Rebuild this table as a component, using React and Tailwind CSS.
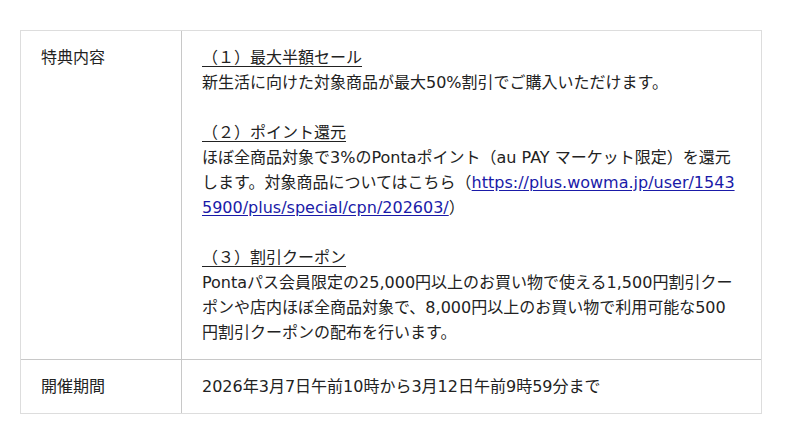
export default function App() {
  const font = { fontFamily: '"DejaVu Sans", "Noto Sans CJK JP", sans-serif' };
  return (
    <div className="min-h-[444px] w-[800px] bg-white pl-[20px] pt-[30px] text-[16px] leading-[25px] text-[#222]" style={font}>
      <div className="grid w-[742px] grid-cols-[161px_1fr] border border-[#dddddd]">
        <div className="border-b border-r border-[#c8c8c8] px-[20px] py-[14px]">特典内容</div>
        <div className="border-b border-[#c8c8c8] px-[20px] py-[14px]">
          <div><span className="underline underline-offset-[3px]">（１）最大半額セール</span></div>
          <div>新生活に向けた対象商品が最大50%割引でご購入いただけます。</div>
          <div>&nbsp;</div>
          <div><span className="underline underline-offset-[3px]">（２）ポイント還元</span></div>
          <div>
            ほぼ全商品対象で3%のPontaポイント（au PAY マーケット限定）を還元します。対象商品についてはこちら（
            <a href="#" className="break-all text-[#1a1aa8] underline underline-offset-[2px]">https://plus.wowma.jp/user/15435900/plus/special/cpn/202603/</a>）
          </div>
          <div>&nbsp;</div>
          <div><span className="underline underline-offset-[3px]">（３）割引クーポン</span></div>
          <div>Pontaパス会員限定の25,000円以上のお買い物で使える1,500円割引クーポンや店内ほぼ全商品対象で、8,000円以上のお買い物で利用可能な500円割引クーポンの配布を行います。</div>
        </div>
        <div className="border-r border-[#c8c8c8] px-[20px] py-[14px]">開催期間</div>
        <div className="px-[20px] py-[14px]">2026年3月7日午前10時から3月12日午前9時59分まで</div>
      </div>
    </div>
  );
}
